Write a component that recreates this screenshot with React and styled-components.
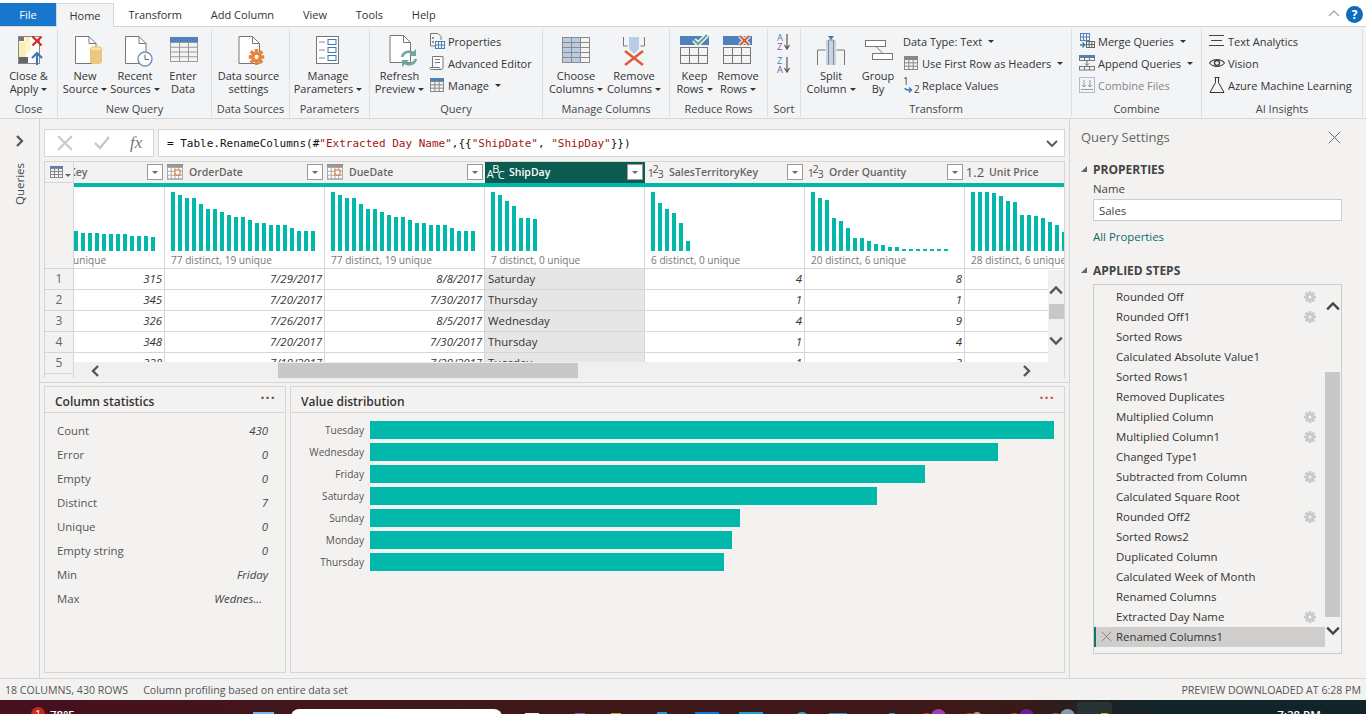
import React from 'react';
import styled, { createGlobalStyle } from 'styled-components';

const FONT = `"Open Sans", "Noto Sans", sans-serif`;

const GlobalStyle = createGlobalStyle`
  html, body { margin: 0; padding: 0; background: #f3f2f1; }
  body { font-family: ${FONT}; color: #333; }
  * { box-sizing: border-box; }
`;

const Page = styled.div`
  width: 1366px;
  height: 714px;
  overflow: hidden;
  display: flex;
  flex-direction: column;
  font-size: 11.4px;
`;

/* tabs */
const TabBar = styled.div`
  height: 27px;
  flex: none;
  background: #fff;
  border-bottom: 1px solid #d6d6d6;
  display: flex;
  align-items: flex-end;
  padding-right: 3px;
`;
const FileTab = styled.div`
  width: 56px;
  height: 23px;
  background: #1777cd;
  color: #fff;
  display: flex;
  align-items: center;
  justify-content: center;
  font-size: 11px;
`;
const Tab = styled.div`
  height: ${p => (p.$active ? '24px' : '23px')};
  padding: 0 14.4px;
  display: flex;
  align-items: center;
  font-size: 11px;
  color: #333;
  ${p => p.$active && `
    width: 58px;
    justify-content: center;
    padding: 0;
    background: #f3f4f6;
    border: 1px solid #d6d6d6;
    border-bottom: none;
    margin-bottom: -1px;
  `}
`;
const TabRight = styled.div`
  margin-left: auto;
  align-self: center;
  display: flex;
  align-items: center;
  gap: 6px;
  padding-top: 2px;
`;
const Help = styled.div`
  width: 17px;
  height: 17px;
  border-radius: 50%;
  background: #0f6cbd;
  color: #fff;
  font-weight: 700;
  font-size: 12px;
  line-height: 17px;
  text-align: center;
`;

/* ribbon */
const Ribbon = styled.div`
  height: 92px;
  flex: none;
  background: #f3f4f6;
  border-bottom: 1px solid #d6d6d6;
  display: flex;
  font-size: 11px;
`;
const Group = styled.div`
  width: ${p => p.$w}px;
  flex: none;
  height: 88px;
  margin-top: 2px;
  border-right: 1px solid #dcdddf;
  display: flex;
  flex-direction: column;
`;
const GroupBody = styled.div`
  flex: 1;
  display: flex;
  padding-left: ${p => p.$pl || 0}px;
`;
const GroupLabel = styled.div`
  height: 15px;
  line-height: 14px;
  text-align: center;
  color: #444;
`;
const Large = styled.div`
  width: ${p => p.$w}px;
  flex: none;
  display: flex;
  flex-direction: column;
  align-items: center;
  padding-top: 4px;
`;
const IconSlot = styled.div`
  height: 36px;
  display: flex;
  align-items: flex-start;
  justify-content: center;
`;
const BtnLabel = styled.div`
  line-height: 13px;
  text-align: center;
  white-space: nowrap;
  color: #333;
`;
const Caret = styled.span`
  display: inline-block;
  width: 0;
  height: 0;
  margin-left: 3px;
  vertical-align: 2px;
  border-left: 3px solid transparent;
  border-right: 3px solid transparent;
  border-top: 3px solid #333;
`;
const Stack = styled.div`
  width: ${p => p.$w}px;
  flex: none;
  padding-top: 1px;
  padding-left: ${p => p.$pl || 0}px;
`;
const SmallRow = styled.div`
  height: 22px;
  display: flex;
  align-items: center;
  gap: ${p => (p.$gap === undefined ? 3 : p.$gap)}px;
  white-space: nowrap;
  color: ${p => (p.$off ? '#858585' : '#333')};
`;
const SmallSlot = styled.div`
  width: 16px;
  height: 16px;
  flex: none;
  display: flex;
`;
const SortBox = styled.div`
  width: 32px;
  padding: 4px 0 0 8px;
  display: flex;
  flex-direction: column;
  gap: 5px;
`;

/* body */
const Body = styled.div`
  flex: 1;
  min-height: 0;
  display: flex;
`;
const Rail = styled.div`
  width: 40px;
  flex: none;
  border-right: 1px solid #d2d2d2;
  display: flex;
  flex-direction: column;
  align-items: center;
  padding: 16px 1px 0 0;
`;
const RailText = styled.div`
  margin-top: 16px;
  writing-mode: vertical-rl;
  transform: rotate(180deg);
  font-size: 11.5px;
  color: #444;
`;
const Main = styled.div`
  flex: 1;
  min-width: 0;
  display: flex;
  flex-direction: column;
  padding: 10px 4px 5px 4px;
`;
const FormulaRow = styled.div`
  height: 28px;
  flex: none;
  display: flex;
  gap: 4px;
  margin-bottom: 4px;
`;
const FormulaBtns = styled.div`
  width: 110px;
  background: #fff;
  border: 1px solid #d6d6d6;
  display: flex;
  align-items: center;
  padding-left: 12px;
  gap: 21px;
`;
const Fx = styled.span`
  font-family: "Liberation Serif", serif;
  font-style: italic;
  font-size: 17px;
  color: #777;
  margin-left: -1px;
`;
const FormulaInput = styled.div`
  flex: 1;
  background: #fff;
  border: 1px solid #d6d6d6;
  display: flex;
  align-items: center;
  justify-content: space-between;
  padding: 0 6px 0 8px;
  font-family: "DejaVu Sans Mono", monospace;
  font-size: 11px;
  color: #111;
  white-space: pre;
`;
const Str = styled.span`
  color: #a31515;
`;

const GridFrame = styled.div`
  height: 217px;
  flex: none;
  display: flex;
  border: 1px solid #d6d6d6;
  border-bottom: none;
  background: #f3f2f1;
`;
const IndexCol = styled.div`
  width: 29px;
  flex: none;
  border-right: 1px solid #d6d6d6;
  color: #666;
  font-size: 12px;
`;
const Corner = styled.div`
  height: 21px;
  display: flex;
  align-items: center;
  padding-left: 5px;
  border-bottom: 1px solid #d6d6d6;
`;
const IndexBlank = styled.div`
  height: 86px;
  border-bottom: 1px solid #d6d6d6;
`;
const IndexCell = styled.div`
  height: 21px;
  border-bottom: 1px solid #d6d6d6;
  display: flex;
  align-items: center;
  justify-content: center;
  padding-bottom: 2px;
`;
const DataArea = styled.div`
  flex: 1;
  min-width: 0;
  display: flex;
  flex-direction: column;
`;
const Scroller = styled.div`
  height: 200px;
  flex: none;
  overflow: hidden;
  position: relative;
  background: #fff;
`;
const Columns = styled.div`
  display: flex;
  margin-left: -69px;
`;
const Column = styled.div`
  width: 160px;
  flex: none;
`;
const ColHead = styled.div`
  height: 21px;
  display: flex;
  align-items: center;
  position: relative;
  background: ${p => (p.$selected ? '#0b5c50' : '#f3f2f1')};
  color: ${p => (p.$selected ? '#fff' : '#666')};
  font-weight: 600;
  font-size: 10.5px;
  padding: 0 0 2px 1px;
  white-space: nowrap;
`;
const TypeIcon = styled.span`
  width: 18px;
  flex: none;
  display: flex;
  align-items: center;
  justify-content: center;
  margin-right: 5px;
  font-weight: 400;
  font-size: 13px;
  white-space: nowrap;
  color: ${p => (p.$selected ? '#fff' : '#555')};
`;
const Sup = styled.span`
  font-size: 11px;
  margin-right: -1.5px;
  position: relative;
  top: ${p => p.$top}px;
  line-height: 1;
`;
const FilterBtn = styled.div`
  position: absolute;
  right: 2px;
  top: 2px;
  width: 16px;
  height: 16px;
  background: #fff;
  border: 1px solid #999;
  display: flex;
  align-items: center;
  justify-content: center;
  &::after {
    content: '';
    border-left: 3px solid transparent;
    border-right: 3px solid transparent;
    border-top: 3px solid #666;
  }
`;
const Quality = styled.div`
  height: 4px;
  background: #01b8aa;
`;
const ChartCell = styled.div`
  height: 82px;
  border-bottom: 1px solid #d6d6d6;
  border-right: 1px solid #d6d6d6;
  padding: 5px 0 0 6px;
  overflow: hidden;
  background: #fff;
`;
const Bars = styled.div`
  height: 59px;
  display: flex;
  align-items: flex-end;
  gap: 3px;
`;
const Bar = styled.div`
  width: 4px;
  flex: none;
  height: ${p => p.$h}px;
  background: #01b8aa;
`;
const ChartText = styled.div`
  margin-top: 2px;
  font-size: 10.1px;
  line-height: 15px;
  color: #777;
  white-space: nowrap;
`;
const Cell = styled.div`
  height: 21px;
  border-bottom: 1px solid #d6d6d6;
  border-right: 1px solid #d6d6d6;
  display: flex;
  align-items: center;
  padding: 0 2px 2px 3px;
  justify-content: ${p => (p.$text ? 'flex-start' : 'flex-end')};
  font-style: ${p => (p.$text ? 'normal' : 'italic')};
  background: ${p => (p.$selected ? '#e6e6e6' : '#fff')};
  color: #333;
`;
const VScroll = styled.div`
  position: absolute;
  right: 0;
  top: 108px;
  width: 16px;
  height: 92px;
  background: #f0f0f0;
  display: flex;
  flex-direction: column;
  align-items: center;
  padding-top: 14px;
`;
const VThumb = styled.div`
  width: 15px;
  height: 15px;
  margin-top: 6px;
  margin-bottom: 14px;
  background: #c8c8c8;
`;
const HScroll = styled.div`
  height: 17px;
  flex: none;
  background: #f0f0f0;
  display: flex;
  align-items: center;
  padding-left: 16px;
`;
const HThumb = styled.div`
  width: 300px;
  height: 15px;
  margin-left: 176px;
  margin-right: 442px;
  background: #c8c8c8;
`;

const Divider = styled.div`
  height: 1px;
  flex: none;
  background: #d6d6d6;
  margin: 4px -4px 3px -4px;
`;
const Panels = styled.div`
  flex: 1;
  min-height: 0;
  display: flex;
  gap: 4px;
`;
const Panel = styled.div`
  ${p => (p.$w ? `width: ${p.$w}px; flex: none;` : 'flex: 1;')}
  border: 1px solid #d6d6d6;
`;
const PanelHead = styled.div`
  height: 26px;
  border-bottom: 1px solid #d6d6d6;
  display: flex;
  align-items: center;
  justify-content: space-between;
  padding: 4px 9px 0 10px;
  font-weight: 600;
  font-size: 12px;
  color: #333;
`;
const Dots = styled.span`
  font-size: 14px;
  font-weight: 700;
  letter-spacing: 1.2px;
  line-height: 10px;
  margin-top: -7px;
  color: ${p => p.$c || '#555'};
`;
const StatList = styled.div`
  padding: 5px 17px 0 12px;
`;
const StatRow = styled.div`
  height: 24px;
  display: flex;
  align-items: center;
  justify-content: space-between;
  color: #555;
`;
const StatValue = styled.span`
  font-style: italic;
  color: #444;
  padding-right: ${p => (p.$trim ? 6 : 0)}px;
`;
const DistList = styled.div`
  padding-top: 8px;
  display: flex;
  flex-direction: column;
  gap: 4px;
`;
const DistRow = styled.div`
  height: 18px;
  display: flex;
  align-items: center;
`;
const DistLabel = styled.div`
  width: 73px;
  flex: none;
  text-align: right;
  margin-right: 6px;
  font-size: 10.1px;
  color: #555;
`;
const DistBar = styled.div`
  height: 18px;
  width: ${p => p.$w}px;
  background: #01b8aa;
`;

/* query settings */
const Settings = styled.div`
  width: 297px;
  flex: none;
  border-left: 1px solid #d6d6d6;
  padding: 0 24px 0 23px;
`;
const SettingsHead = styled.div`
  height: 36px;
  margin: 0 1px 0 -12px;
  display: flex;
  align-items: center;
  justify-content: space-between;
  font-size: 13px;
  color: #666;
`;
const Section = styled.div`
  height: 20px;
  margin-top: ${p => p.$mt}px;
  position: relative;
  display: flex;
  align-items: center;
  font-weight: 700;
  font-size: 12px;
  color: #444;
  &::before {
    content: '';
    position: absolute;
    left: -12px;
    top: 7px;
    border-left: 6px solid transparent;
    border-bottom: 6px solid #666;
  }
`;
const NameLabel = styled.div`
  margin-top: 1px;
  line-height: 18px;
  color: #444;
`;
const NameInput = styled.div`
  height: 22px;
  margin-top: 1px;
  background: #fff;
  border: 1px solid #ccc;
  padding-left: 5px;
  display: flex;
  align-items: center;
  color: #444;
`;
const PropsLink = styled.div`
  margin-top: 7px;
  line-height: 18px;
  color: #0b6a6a;
`;
const StepBox = styled.div`
  height: 370px;
  margin-top: 4px;
  border: 1px solid #ccc;
  padding-top: 2px;
  display: flex;
  position: relative;
`;
const Steps = styled.div`
  flex: 1;
  min-width: 0;
`;
const Step = styled.div`
  height: 20px;
  display: flex;
  align-items: center;
  justify-content: space-between;
  padding: 0 9px 1px 22px;
  color: #333;
  position: relative;
  ${p => p.$current && `
    background: #cfcecd;
    border-left: 2px solid #0b7a6a;
    padding-left: 20px;
  `}
`;
const StepX = styled.span`
  position: absolute;
  left: 5px;
  top: 4px;
  display: flex;
`;
const StepScroll = styled.div`
  width: 15px;
  flex: none;
  margin-right: 1px;
  display: flex;
  flex-direction: column;
  align-items: center;
  padding-top: 13px;
`;
const StepThumb = styled.div`
  width: 15px;
  height: 245px;
  flex: none;
  margin-top: 58px;
  margin-bottom: 6px;
  background: #c8c8c8;
`;

const Status = styled.div`
  height: 22px;
  flex: none;
  border-top: 1px solid #d6d6d6;
  background: #f3f2f1;
  display: flex;
  align-items: center;
  padding: 0 5px;
  gap: 15px;
  font-size: 10.6px;
  color: #555;
`;
const StatusRight = styled.span`
  margin-left: auto;
`;

/* the sliver of windows taskbar under the app */
const Taskbar = styled.div`
  height: 14px;
  flex: none;
  overflow: hidden;
  display: flex;
  align-items: flex-start;
  background: linear-gradient(90deg, #47101f 0%, #3e1a18 40%, #40181a 62%, #3a1a16 74%, #10252a 85%, #10252a 100%);
  color: #fff;
`;
const Tile = styled.div`
  width: ${p => p.$w}px;
  height: 16px;
  flex: none;
  margin-left: ${p => p.$ml}px;
  margin-top: ${p => p.$mt}px;
  background: ${p => p.$c};
  border-radius: ${p => p.$r || 0}px;
`;
const Badge = styled.div`
  width: 14px;
  height: 14px;
  flex: none;
  margin: 7px 0 0 31px;
  border-radius: 50%;
  background: #c42b1c;
  font-size: 10px;
  line-height: 14px;
  text-align: center;
`;
const TrayText = styled.div`
  flex: none;
  margin-left: ${p => p.$ml}px;
  margin-top: 8px;
  font-size: 11.5px;
  line-height: 14px;
  font-weight: 600;
`;
const ActiveApp = styled.div`
  width: 35px;
  height: 20px;
  flex: none;
  margin: 2px 0 0 2px;
  background: #263436;
  border-radius: 4px;
  display: flex;
  justify-content: flex-end;
  padding: 11px 4px 0 0;
`;
const AppMark = styled.div`
  width: 7px;
  height: 8px;
  background: #e8a812;
`;

const Chev = ({ d = 'right', size = 12, c = '#555', w = 2.2 }) => {
  const pts = {
    right: '4,1 9,6 4,11',
    left: '8,1 3,6 8,11',
    up: '1,8 6,3 11,8',
    down: '1,4 6,9 11,4',
  }[d];
  return (
    <svg width={size} height={size} viewBox="0 0 12 12">
      <polyline points={pts} fill="none" stroke={c} strokeWidth={w} />
    </svg>
  );
};

const Gear = ({ size = 12, c = '#c9c9c9', hole = '#f3f2f1' }) => (
  <svg width={size} height={size} viewBox="0 0 12 12">
    {[0, 45, 90, 135].map(a => (
      <rect key={a} x="4.7" y="0" width="2.6" height="12" fill={c} transform={`rotate(${a} 6 6)`} />
    ))}
    <circle cx="6" cy="6" r="4" fill={c} />
    <circle cx="6" cy="6" r="1.6" fill={hole} />
  </svg>
);

const DocPage = ({ x = 0, y = 0 }) => (
  <g transform={`translate(${x} ${y})`}>
    <path d="M.5 .5H14l7 7V27.5H.5Z" fill="#fff" stroke="#777" />
    <path d="M14 .5V7.5H21" fill="none" stroke="#777" />
  </g>
);

const Icon34 = ({ children }) => (
  <svg width="36" height="34" viewBox="0 0 36 34">{children}</svg>
);

const GridLines = ({ x, y, w, h, cols, rows, c = '#888' }) => {
  const lines = [];
  for (let i = 1; i < cols; i++) lines.push(<line key={`c${i}`} x1={x + (w * i) / cols} x2={x + (w * i) / cols} y1={y} y2={y + h} stroke={c} />);
  for (let i = 1; i < rows; i++) lines.push(<line key={`r${i}`} y1={y + (h * i) / rows} y2={y + (h * i) / rows} x1={x} x2={x + w} stroke={c} />);
  return (
    <g>
      <rect x={x} y={y} width={w} height={h} fill="none" stroke={c} />
      {lines}
    </g>
  );
};

const CloseApplyIcon = () => (
  <Icon34>
    <rect x="7.5" y="3.5" width="21" height="27" fill="#fff" stroke="#888" />
    <path d="M8 9h6v15h-6zM14 4h5v2l-5 14z" fill="#fbeeb4" />
    <path d="M14 12l6-6v10l-6 8z" fill="#fdf5cf" />
    <rect x="8" y="4" width="5" height="4" fill="#777" />
    <rect x="8" y="24" width="9" height="6" fill="#666" />
    <path d="M21.5 3.5l9 9M30.5 3.5l-9 9" stroke="#d0312d" strokeWidth="2.4" />
    <path d="M26 32V20M21 25l5-5 5 5" fill="none" stroke="#3f78b5" strokeWidth="2.2" />
  </Icon34>
);
const NewSourceIcon = () => (
  <Icon34>
    <DocPage x={8} y={3} />
    <path d="M23 16v13c0 3 12 3 12 0V16z" fill="#edc77e" />
    <ellipse cx="29" cy="16" rx="6" ry="2.4" fill="#f6dfa8" stroke="#e3bc72" />
  </Icon34>
);
const RecentIcon = () => (
  <Icon34>
    <DocPage x={8} y={3} />
    <circle cx="28" cy="26" r="7" fill="#fff" stroke="#6f93b8" strokeWidth="1.4" />
    <path d="M28 21.5V26.5H32" fill="none" stroke="#666" />
  </Icon34>
);
const EnterDataIcon = () => (
  <Icon34>
    <rect x="5" y="4" width="28" height="5" fill="#4f81bd" />
    <GridLines x={5.5} y={9.5} w={27} h={19} cols={3} rows={4} c="#999" />
  </Icon34>
);
const SourceSettingsIcon = () => (
  <Icon34>
    <DocPage x={7.5} y={3} />
    <g transform="translate(17.5 16)">
      <Gear size={16} c="#e8833a" hole="#fff" />
    </g>
  </Icon34>
);
const ParamsIcon = () => (
  <Icon34>
    <rect x="6.5" y="3.5" width="22" height="27" fill="#fff" stroke="#777" />
    {[9, 17, 25].map(y => (
      <g key={y}>
        <line x1="9" x2="15" y1={y} y2={y} stroke="#888" />
        <rect x="18" y={y - 2.5} width="8" height="5" fill="none" stroke="#3a76b5" />
      </g>
    ))}
  </Icon34>
);
const RefreshIcon = () => (
  <Icon34>
    <DocPage x={7.5} y={2} />
    <g transform="translate(1 0)" fill="none" stroke="#6fa89a" strokeWidth="2.6">
      <path d="M19 24a7 7 0 0 1 12-3" />
      <path d="M33 26a7 7 0 0 1-12 3" />
    </g>
    <path d="M34 16v7h-7zM20 34v-7h7z" fill="#6fa89a" />
  </Icon34>
);
const ChooseIcon = () => (
  <Icon34>
    <rect x="4.5" y="4" width="18" height="25" fill="#b8cce4" />
    <GridLines x={4.5} y={4.5} w={27} h={25} cols={3} rows={5} c="#8a8a8a" />
  </Icon34>
);
const RemoveColIcon = () => (
  <Icon34>
    <path d="M7.5 4v9h4M28.5 4v9h-4" fill="none" stroke="#777" />
    <path d="M13 4h10v12l-5 5-5-5z" fill="#b8cce4" />
    <path d="M9 18l18 14M27 18L9 32" stroke="#d9603b" strokeWidth="2.6" />
  </Icon34>
);
const RowsIcon = ({ children }) => (
  <Icon34>
    <rect x="3" y="3" width="29" height="9" fill="#4f81bd" />
    <GridLines x={3.5} y={14.5} w={27} h={16} cols={3} rows={2} c="#777" />
    {children}
  </Icon34>
);
const SplitIcon = () => (
  <Icon34>
    <path d="M4.5 32V17h8M31.5 32V17h-8" fill="none" stroke="#777" />
    <rect x="13" y="7" width="10" height="25" fill="#c4d5e8" />
    <path d="M15.5 7h5v25M15.5 7v25" fill="none" stroke="#888" />
    <path d="M15 3h6l-3 4z" fill="#3f78b5" />
  </Icon34>
);
const GroupIcon = () => (
  <Icon34>
    <rect x="5.5" y="7.5" width="20" height="6" fill="#fff" stroke="#777" />
    <rect x="12.5" y="20.5" width="20" height="6" fill="#fff" stroke="#777" />
    <path d="M16 13.5l7 7" stroke="#777" />
  </Icon34>
);

const S = ({ children }) => <svg width="16" height="16" viewBox="0 0 16 16">{children}</svg>;
const PropsIcon = () => (
  <S>
    <path d="M1.5 .5H9l3 3V7M1.5 .5V13H6" fill="none" stroke="#777" />
    <circle cx="4" cy="5" r="1" fill="#777" />
    <circle cx="4" cy="9" r="1" fill="#777" />
    <GridLines x={6.5} y={8.5} w={9} h={7} cols={3} rows={2} c="#4f81bd" />
  </S>
);
const EditorIcon = () => (
  <S>
    <path d="M3.5 1.5H14V12c0 2-1 2.5-2 2.5H2c-1 0-1.5-2-.5-2H10c1 0 1 1 1 2" fill="#fff" stroke="#777" />
    <path d="M3.5 1.5V12M6 4.5h5M6 7.5h5" fill="none" stroke="#777" />
  </S>
);
const MiniTable = ({ c = '#4f81bd' }) => (
  <S>
    <rect x="1" y="1" width="14" height="3" fill={c} />
    <GridLines x={1.5} y={4.5} w={13} h={10} cols={3} rows={3} c="#888" />
  </S>
);
const ReplaceIcon = () => (
  <svg width="18" height="17" viewBox="0 0 18 17" overflow="visible">
    <text x="0" y="8" fontSize="10" fill="#444" fontFamily={FONT}>1</text>
    <path d="M2 11c0 2 2 2 6 2M6 10.5l2.5 2.5-2.5 2.5" fill="none" stroke="#3f78b5" strokeWidth="1.4" />
    <text x="11" y="16" fontSize="10" fill="#444" fontFamily={FONT}>2</text>
  </svg>
);
const MergeIcon = () => (
  <S>
    <GridLines x={1.5} y={.5} w={9} h={7} cols={3} rows={2} c="#4f81bd" />
    <GridLines x={7.5} y={8.5} w={8} h={6} cols={3} rows={2} c="#666" />
    <path d="M1 12h4M3.5 9.5L6 12l-2.5 2.5" fill="none" stroke="#3f78b5" strokeWidth="1.3" />
  </S>
);
const AppendIcon = () => (
  <S>
    <rect x="0" y="0" width="16" height="2" fill="#4f81bd" />
    <GridLines x={.5} y={2.5} w={15} h={3} cols={3} rows={1} c="#777" />
    <path d="M8 6v4M6 8.5l2 2 2-2" fill="none" stroke="#3f78b5" />
    <GridLines x={.5} y={11.5} w={15} h={3.5} cols={3} rows={1} c="#777" />
  </S>
);
const CombineIcon = () => (
  <S>
    <rect x=".5" y=".5" width="15" height="15" fill="none" stroke="#a9bdd4" />
    <path d="M5 3v7M3 8l2 2 2-2M11 3v7M9 8l2 2 2-2M2 12.5h12" fill="none" stroke="#9a9a9a" />
  </S>
);
const LinesIcon = () => (
  <S>
    <path d="M0 2.5h15M2 7.5h11M0 12.5h15" stroke="#444" />
  </S>
);
const EyeIcon = () => (
  <S>
    <path d="M.5 8C4 3.5 12 3.5 15.5 8 12 12.5 4 12.5 .5 8Z" fill="none" stroke="#444" strokeWidth="1.2" />
    <circle cx="8" cy="8" r="2.5" fill="none" stroke="#444" strokeWidth="1.4" />
  </S>
);
const FlaskIcon = () => (
  <S>
    <path d="M5.5 .5h5M6.5 .5v5L1 15.5h14L9.5 5.5v-5" fill="none" stroke="#333" />
  </S>
);
const CornerIcon = () => (
  <svg width="22" height="14" viewBox="0 0 22 14">
    <rect x="0" y="1" width="13" height="3" fill="#4f81bd" />
    <GridLines x={.5} y={3.5} w={12} h={9} cols={3} rows={3} c="#888" />
    <path d="M15 9h6l-3 3z" fill="#666" />
  </svg>
);
const DateIcon = () => (
  <svg width="16" height="16" viewBox="0 0 16 16">
    <rect x=".5" y=".5" width="15" height="14.5" fill="#fff" stroke="#888" />
    <rect x=".5" y=".5" width="15" height="3" fill="#999" />
    <GridLines x={.5} y={3.5} w={15} h={11.5} cols={4} rows={3} c="#aaa" />
    <rect x="8" y="6" width="5" height="5" fill="#fff" stroke="#d8691f" />
  </svg>
);
const BigX = ({ c = '#c8c8c8', size = 16, w = 2 }) => (
  <svg width={size} height={size} viewBox="0 0 16 16">
    <path d="M1 1l14 14M15 1L1 15" stroke={c} strokeWidth={w} />
  </svg>
);
const CheckMark = () => (
  <svg width="16" height="16" viewBox="0 0 16 16">
    <path d="M1 8l5 5L15 2" fill="none" stroke="#c8c8c8" strokeWidth="2.4" />
  </svg>
);

const orderBars = [59, 56, 53, 53, 47, 42, 42, 39, 36, 34, 34, 31, 28, 28, 26, 26, 26, 23, 20, 20, 20];
const columns = [
  { name: 'ProductKey', type: 'n', stat: '77 distinct, 0 unique', filter: true,
    bars: [59, 52, 46, 40, 36, 30, 26, 24, 22, 20, 18, 18, 18, 17, 17, 17, 17, 15, 15, 15, 14],
    vals: ['315', '345', '326', '348', '328'] },
  { name: 'OrderDate', type: 'd', stat: '77 distinct, 19 unique', filter: true,
    bars: orderBars, vals: ['7/29/2017', '7/20/2017', '7/26/2017', '7/20/2017', '7/19/2017'] },
  { name: 'DueDate', type: 'd', stat: '77 distinct, 19 unique', filter: true,
    bars: orderBars, vals: ['8/8/2017', '7/30/2017', '8/5/2017', '7/30/2017', '7/29/2017'] },
  { name: 'ShipDay', type: 'a', stat: '7 distinct, 0 unique', filter: true, selected: true, text: true,
    bars: [59, 56, 50, 45, 33, 33, 32], vals: ['Saturday', 'Thursday', 'Wednesday', 'Thursday', 'Tuesday'] },
  { name: 'SalesTerritoryKey', type: 'n', stat: '6 distinct, 0 unique', filter: true,
    bars: [59, 48, 42, 38, 28, 10], vals: ['4', '1', '4', '1', '1'] },
  { name: 'Order Quantity', type: 'n', stat: '20 distinct, 6 unique', filter: true,
    bars: [59, 53, 51, 33, 30, 23, 13, 13, 10, 7, 6, 4, 4, 2, 2, 2, 2, 2, 2, 2], vals: ['8', '1', '9', '4', '3'] },
  { name: 'Unit Price', type: 'f', stat: '28 distinct, 6 unique', filter: false,
    bars: [59, 59, 59, 58, 55, 50, 49, 36, 36, 35, 33, 29, 26, 19, 18, 17, 16, 15, 14, 13, 12, 11],
    vals: ['', '', '', '', ''] },
];

const TypeGlyph = ({ type, selected }) => {
  if (type === 'd') return <TypeIcon><DateIcon /></TypeIcon>;
  if (type === 'f') return <TypeIcon>1.2</TypeIcon>;
  if (type === 'a') {
    return (
      <TypeIcon $selected={selected}>
        <Sup $top={2}>A</Sup><Sup $top={-3}>B</Sup><Sup $top={3}>C</Sup>
      </TypeIcon>
    );
  }
  return (
    <TypeIcon>
      <Sup $top={1}>1</Sup><Sup $top={-3}>2</Sup><Sup $top={2}>3</Sup>
    </TypeIcon>
  );
};

const stats = [
  ['Count', '430'], ['Error', '0'], ['Empty', '0'], ['Distinct', '7'],
  ['Unique', '0'], ['Empty string', '0'], ['Min', 'Friday'], ['Max', 'Wednes...'],
];
const dist = [
  ['Tuesday', 684], ['Wednesday', 628], ['Friday', 555], ['Saturday', 507],
  ['Sunday', 370], ['Monday', 362], ['Thursday', 354],
];
const steps = [
  ['Rounded Off', 1], ['Rounded Off1', 1], ['Sorted Rows'], ['Calculated Absolute Value1'],
  ['Sorted Rows1'], ['Removed Duplicates'], ['Multiplied Column', 1], ['Multiplied Column1', 1],
  ['Changed Type1'], ['Subtracted from Column', 1], ['Calculated Square Root'], ['Rounded Off2', 1],
  ['Sorted Rows2'], ['Duplicated Column'], ['Calculated Week of Month'], ['Renamed Columns'],
  ['Extracted Day Name', 1],
];

const LargeBtn = ({ w, icon, line1, line2, caret }) => (
  <Large $w={w}>
    <IconSlot>{icon}</IconSlot>
    <BtnLabel>{line1}<br />{line2}{caret && <Caret />}</BtnLabel>
  </Large>
);

const SortIcon = ({ top, bottom }) => (
  <svg width="16" height="18" viewBox="0 0 16 18" overflow="visible">
    <text x="1" y="8" fontSize="9.5" fill="#4f81bd" fontFamily={FONT}>{top}</text>
    <text x="1" y="17" fontSize="9.5" fill="#8c4fb5" fontFamily={FONT}>{bottom}</text>
    <path d="M11 1v14M8.5 12l2.5 4 2.5-4" fill="none" stroke="#555" strokeWidth="1.2" />
  </svg>
);

export default function App() {
  return (
    <Page>
      <GlobalStyle />
      <TabBar>
        <FileTab>File</FileTab>
        <Tab $active>Home</Tab>
        <Tab>Transform</Tab>
        <Tab>Add Column</Tab>
        <Tab>View</Tab>
        <Tab>Tools</Tab>
        <Tab>Help</Tab>
        <TabRight>
          <Chev d="up" size={12} c="#aaa" w={1.4} />
          <Help>?</Help>
        </TabRight>
      </TabBar>

      <Ribbon>
        <Group $w={58}>
          <GroupBody>
            <LargeBtn w={57} icon={<CloseApplyIcon />} line1="Close &" line2="Apply" caret />
          </GroupBody>
          <GroupLabel>Close</GroupLabel>
        </Group>
        <Group $w={154}>
          <GroupBody $pl={2}>
            <LargeBtn w={50} icon={<NewSourceIcon />} line1="New" line2="Source" caret />
            <LargeBtn w={50} icon={<RecentIcon />} line1="Recent" line2="Sources" caret />
            <LargeBtn w={46} icon={<EnterDataIcon />} line1="Enter" line2="Data" />
          </GroupBody>
          <GroupLabel>New Query</GroupLabel>
        </Group>
        <Group $w={78}>
          <GroupBody>
            <LargeBtn w={73} icon={<SourceSettingsIcon />} line1="Data source" line2="settings" />
          </GroupBody>
          <GroupLabel>Data Sources</GroupLabel>
        </Group>
        <Group $w={80}>
          <GroupBody>
            <LargeBtn w={76} icon={<ParamsIcon />} line1="Manage" line2="Parameters" caret />
          </GroupBody>
          <GroupLabel>Parameters</GroupLabel>
        </Group>
        <Group $w={173}>
          <GroupBody>
            <LargeBtn w={59} icon={<RefreshIcon />} line1="Refresh" line2="Preview" caret />
            <Stack $w={113}>
              <SmallRow><SmallSlot><PropsIcon /></SmallSlot>Properties</SmallRow>
              <SmallRow><SmallSlot><EditorIcon /></SmallSlot>Advanced Editor</SmallRow>
              <SmallRow><SmallSlot><MiniTable /></SmallSlot>Manage<Caret /></SmallRow>
            </Stack>
          </GroupBody>
          <GroupLabel>Query</GroupLabel>
        </Group>
        <Group $w={127}>
          <GroupBody $pl={4}>
            <LargeBtn w={58} icon={<ChooseIcon />} line1="Choose" line2="Columns" caret />
            <LargeBtn w={58} icon={<RemoveColIcon />} line1="Remove" line2="Columns" caret />
          </GroupBody>
          <GroupLabel>Manage Columns</GroupLabel>
        </Group>
        <Group $w={98}>
          <GroupBody $pl={2}>
            <LargeBtn w={45} icon={
              <RowsIcon>
                <path d="M17 7l4 4 9-9" fill="none" stroke="#f3f4f6" strokeWidth="5" />
                <path d="M17 7l4 4 9-9" fill="none" stroke="#6fa89a" strokeWidth="2.4" />
              </RowsIcon>
            } line1="Keep" line2="Rows" caret />
            <LargeBtn w={42} icon={
              <RowsIcon>
                <path d="M20 3l9 9M29 3l-9 9" stroke="#f3f4f6" strokeWidth="4.4" />
                <path d="M20 3l9 9M29 3l-9 9" stroke="#d9603b" strokeWidth="2.2" />
              </RowsIcon>
            } line1="Remove" line2="Rows" caret />
          </GroupBody>
          <GroupLabel>Reduce Rows</GroupLabel>
        </Group>
        <Group $w={33}>
          <GroupBody>
            <SortBox>
              <SortIcon top="A" bottom="Z" />
              <SortIcon top="Z" bottom="A" />
            </SortBox>
          </GroupBody>
          <GroupLabel>Sort</GroupLabel>
        </Group>
        <Group $w={271}>
          <GroupBody $pl={3}>
            <LargeBtn w={54} icon={<SplitIcon />} line1="Split" line2="Column" caret />
            <LargeBtn w={40} icon={<GroupIcon />} line1="Group" line2="By" />
            <Stack $w={170} $pl={5}>
              <SmallRow>Data Type: Text<Caret /></SmallRow>
              <SmallRow><SmallSlot><MiniTable c="#888" /></SmallSlot>Use First Row as Headers<Caret /></SmallRow>
              <SmallRow $gap={1}><ReplaceIcon />Replace Values</SmallRow>
            </Stack>
          </GroupBody>
          <GroupLabel>Transform</GroupLabel>
        </Group>
        <Group $w={130}>
          <GroupBody>
            <Stack $w={129} $pl={7}>
              <SmallRow><SmallSlot><MergeIcon /></SmallSlot>Merge Queries<Caret /></SmallRow>
              <SmallRow><SmallSlot><AppendIcon /></SmallSlot>Append Queries<Caret /></SmallRow>
              <SmallRow $off><SmallSlot><CombineIcon /></SmallSlot>Combine Files</SmallRow>
            </Stack>
          </GroupBody>
          <GroupLabel>Combine</GroupLabel>
        </Group>
        <Group $w={161}>
          <GroupBody>
            <Stack $w={160} $pl={7}>
              <SmallRow><SmallSlot><LinesIcon /></SmallSlot>Text Analytics</SmallRow>
              <SmallRow><SmallSlot><EyeIcon /></SmallSlot>Vision</SmallRow>
              <SmallRow><SmallSlot><FlaskIcon /></SmallSlot>Azure Machine Learning</SmallRow>
            </Stack>
          </GroupBody>
          <GroupLabel>AI Insights</GroupLabel>
        </Group>
      </Ribbon>

      <Body>
        <Rail>
          <Chev d="right" size={12} c="#555" />
          <RailText>Queries</RailText>
        </Rail>

        <Main>
          <FormulaRow>
            <FormulaBtns>
              <BigX />
              <CheckMark />
              <Fx>fx</Fx>
            </FormulaBtns>
            <FormulaInput>
              <span>= Table.RenameColumns(#<Str>"Extracted Day Name"</Str>,{'{{'}<Str>"ShipDate"</Str>, <Str>"ShipDay"</Str>{'}})'}</span>
              <Chev d="down" size={12} c="#555" w={1.8} />
            </FormulaInput>
          </FormulaRow>

          <GridFrame>
            <IndexCol>
              <Corner><CornerIcon /></Corner>
              <IndexBlank />
              {[1, 2, 3, 4, 5].map(n => <IndexCell key={n}>{n}</IndexCell>)}
            </IndexCol>
            <DataArea>
              <Scroller>
                <Columns>
                  {columns.map(col => (
                    <Column key={col.name}>
                      <ColHead $selected={col.selected}>
                        <TypeGlyph type={col.type} selected={col.selected} />
                        {col.name}
                        {col.filter && <FilterBtn />}
                      </ColHead>
                      <Quality />
                      <ChartCell>
                        <Bars>{col.bars.map((h, i) => <Bar key={i} $h={h} />)}</Bars>
                        <ChartText>{col.stat}</ChartText>
                      </ChartCell>
                      {col.vals.map((v, i) => (
                        <Cell key={i} $text={col.text} $selected={col.selected}>{v}</Cell>
                      ))}
                    </Column>
                  ))}
                </Columns>
                <VScroll>
                  <Chev d="up" size={14} c="#555" w={2} />
                  <VThumb />
                  <Chev d="down" size={14} c="#555" w={2} />
                </VScroll>
              </Scroller>
              <HScroll>
                <Chev d="left" size={12} c="#555" w={2.4} />
                <HThumb />
                <Chev d="right" size={12} c="#555" w={2.4} />
              </HScroll>
            </DataArea>
          </GridFrame>

          <Divider />

          <Panels>
            <Panel $w={242}>
              <PanelHead>Column statistics<Dots>···</Dots></PanelHead>
              <StatList>
                {stats.map(([k, v]) => (
                  <StatRow key={k}>
                    <span>{k}</span>
                    <StatValue $trim={k === 'Max'}>{v}</StatValue>
                  </StatRow>
                ))}
              </StatList>
            </Panel>
            <Panel>
              <PanelHead>Value distribution<Dots $c="#b5533c">···</Dots></PanelHead>
              <DistList>
                {dist.map(([k, w]) => (
                  <DistRow key={k}>
                    <DistLabel>{k}</DistLabel>
                    <DistBar $w={w} />
                  </DistRow>
                ))}
              </DistList>
            </Panel>
          </Panels>
        </Main>

        <Settings>
          <SettingsHead>
            Query Settings
            <BigX c="#666" size={13} w={1.2} />
          </SettingsHead>
          <Section $mt={4}>PROPERTIES</Section>
          <NameLabel>Name</NameLabel>
          <NameInput>Sales</NameInput>
          <PropsLink>All Properties</PropsLink>
          <Section $mt={14}>APPLIED STEPS</Section>
          <StepBox>
            <Steps>
              {steps.map(([name, gear]) => (
                <Step key={name}>{name}{gear && <Gear />}</Step>
              ))}
              <Step $current>
                <StepX><BigX c="#777" size={11} w={1.2} /></StepX>
                Renamed Columns1
              </Step>
            </Steps>
            <StepScroll>
              <Chev d="up" size={14} c="#444" w={2} />
              <StepThumb />
              <Chev d="down" size={14} c="#444" w={2} />
            </StepScroll>
          </StepBox>
        </Settings>
      </Body>

      <Status>
        <span>18 COLUMNS, 430 ROWS</span>
        <span>Column profiling based on entire data set</span>
        <StatusRight>PREVIEW DOWNLOADED AT 6:28 PM</StatusRight>
      </Status>

      <Taskbar>
        <Badge>1</Badge>
        <TrayText $ml={5}>78°F</TrayText>
        <Tile $ml={179} $mt={12} $w={21} $c="#6fb8e8" />
        <Tile $ml={17} $mt={9} $w={211} $c="#fff" $r={12} />
        <Tile $ml={23} $mt={13} $w={14} $c="#f2f2f2" />
        <Tile $ml={36} $mt={13} $w={10} $c="#8064c8" />
        <Tile $ml={26} $mt={13} $w={10} $c="#d8a020" />
        <Tile $ml={36} $mt={12} $w={10} $c="#2e8fe0" />
        <Tile $ml={28} $mt={12} $w={24} $c="#0f78e0" />
        <Tile $ml={20} $mt={12} $w={24} $c="#1a9fd8" />
        <Tile $ml={32} $mt={12} $w={14} $c="#35b0b0" $r={8} />
        <Tile $ml={20} $mt={13} $w={18} $c="#1b98c8" />
        <Tile $ml={42} $mt={13} $w={6} $c="#3d90d0" />
        <Tile $ml={24} $mt={13} $w={15} $c="#d83a2a" $r={8} />
        <Tile $ml={-3} $mt={9} $w={15} $c="#9c40b0" $r={8} />
        <Tile $ml={16} $mt={13} $w={15} $c="#d83a2a" $r={8} />
        <Tile $ml={-5} $mt={12} $w={10} $c="#b89a70" $r={8} />
        <Tile $ml={25} $mt={13} $w={15} $c="#d83a2a" $r={8} />
        <Tile $ml={-3} $mt={9} $w={15} $c="#6a1d9c" $r={8} />
        <Tile $ml={14} $mt={13} $w={15} $c="#d83a2a" $r={8} />
        <Tile $ml={-3} $mt={9} $w={15} $c="#8a9aa8" $r={8} />
        <ActiveApp><AppMark /></ActiveApp>
        <TrayText $ml={165}>7:28 PM</TrayText>
      </Taskbar>
    </Page>
  );
}
